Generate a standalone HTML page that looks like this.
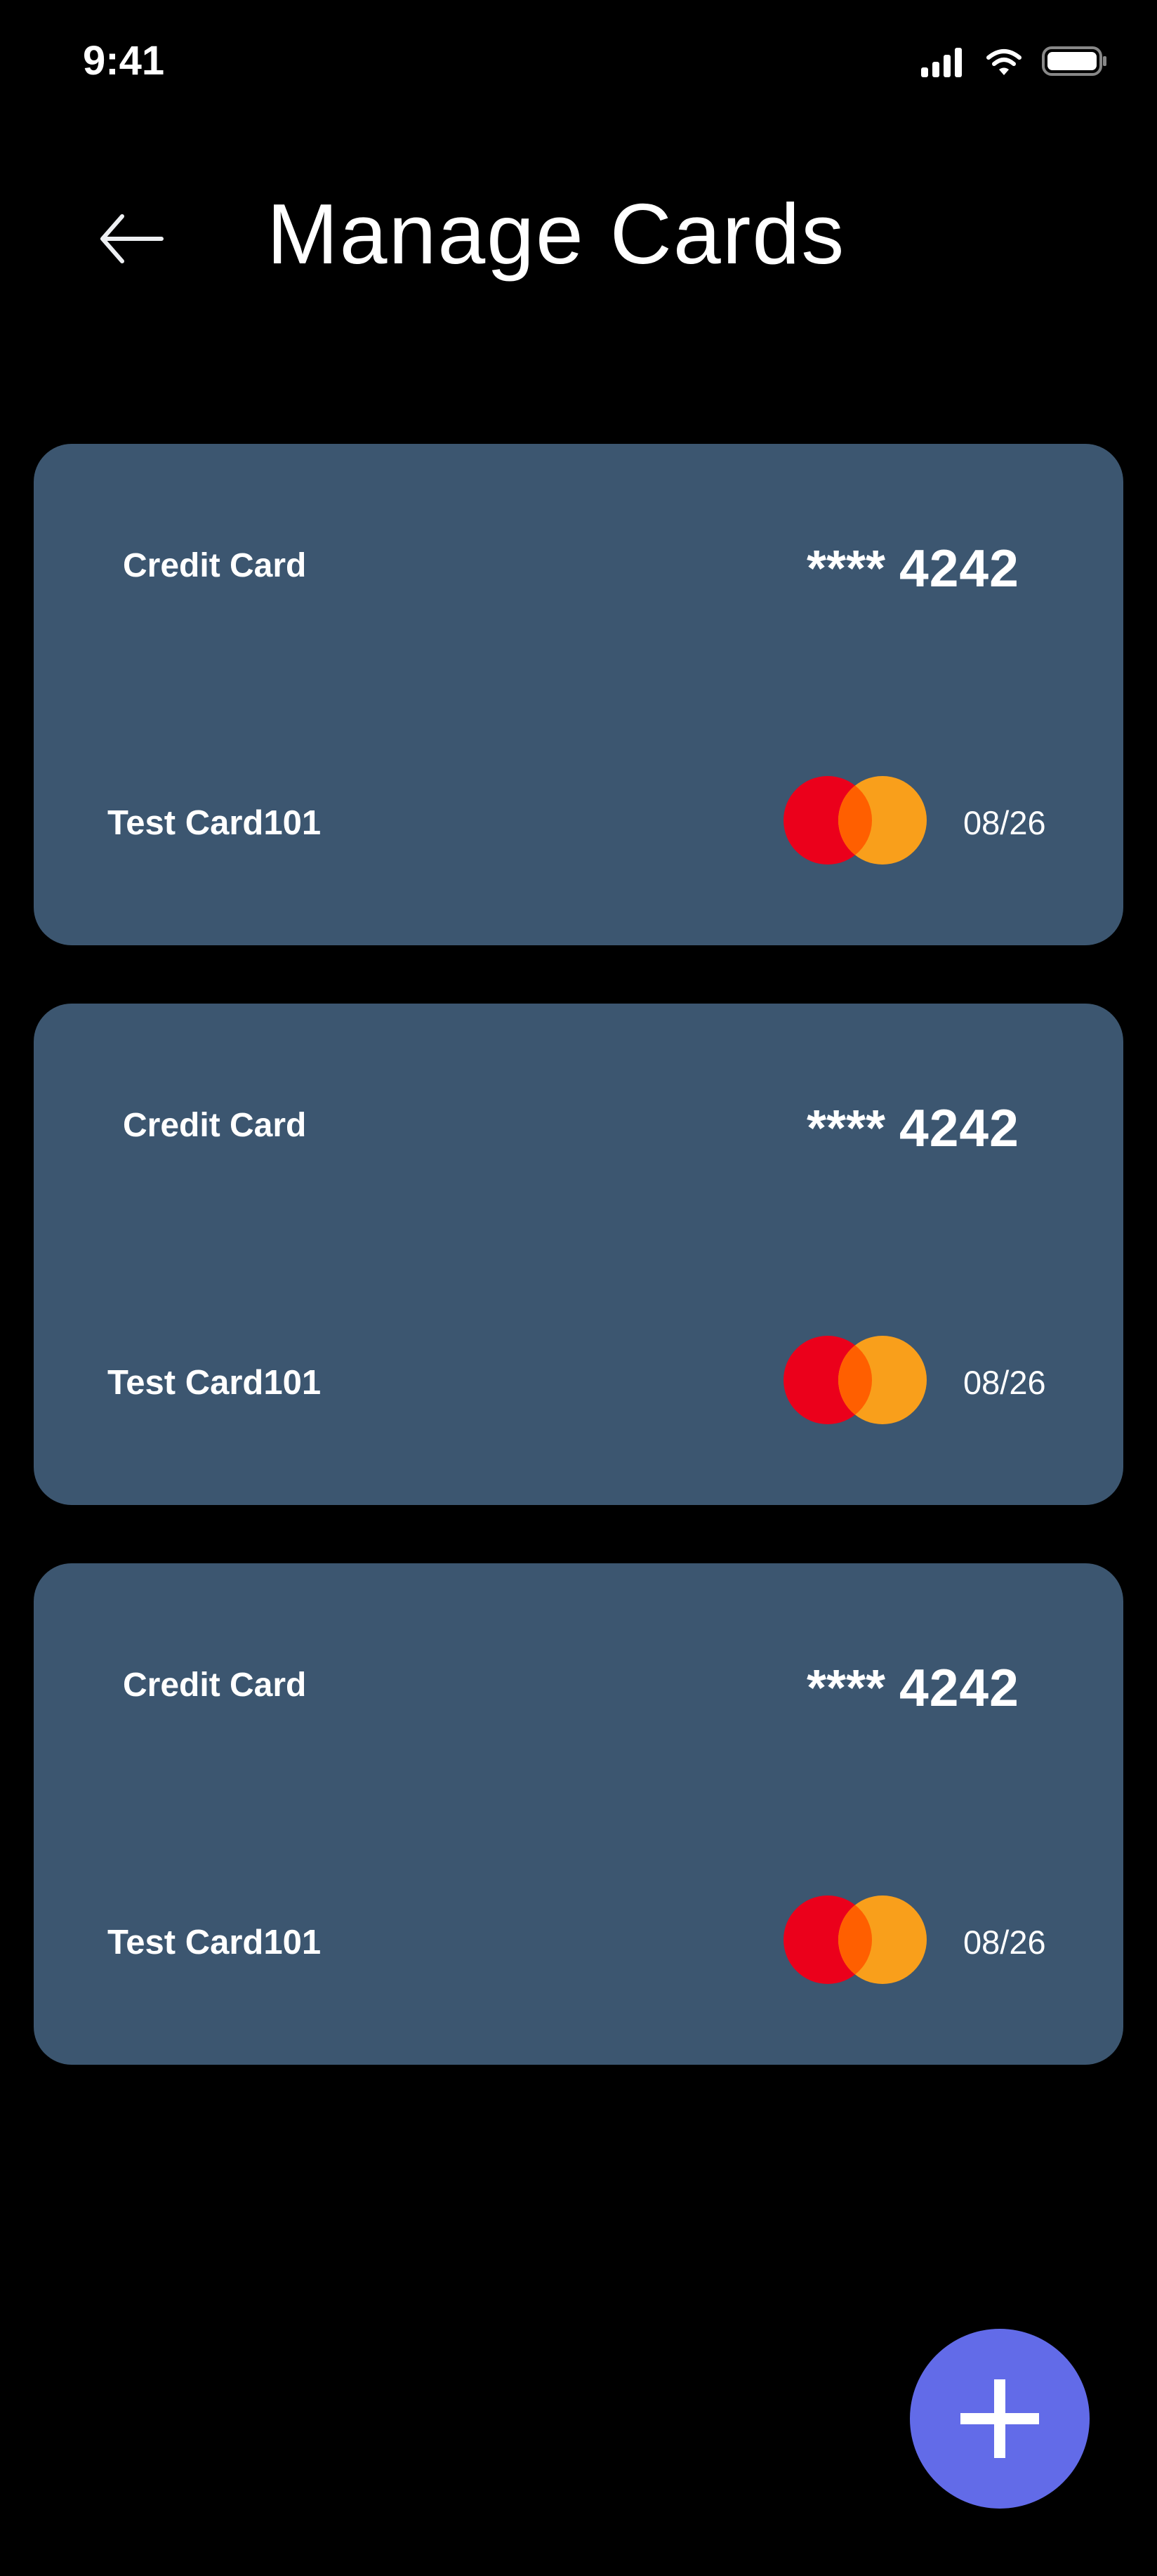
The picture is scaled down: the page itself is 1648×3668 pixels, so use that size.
<!DOCTYPE html>
<html><head><style>
*{margin:0;padding:0;box-sizing:border-box}
body{width:1648px;height:3668px;background:#000;position:relative;overflow:hidden;font-family:"Liberation Sans",sans-serif;color:#fff}
.abs{position:absolute}
.card{position:absolute;left:48px;width:1552px;height:714px;background:#3c5670;border-radius:54px}
.cc{position:absolute;left:127px;top:150px;font-size:48px;font-weight:bold;line-height:1}
.num{position:absolute;left:1101px;top:140px;font-weight:bold;line-height:1;white-space:nowrap}
.num .a{font-size:72px;position:absolute;left:0;top:2px}
.num .b{font-size:75px;position:absolute;left:132px;top:0;letter-spacing:1px}
.name{position:absolute;left:105px;top:516px;font-size:49px;font-weight:bold;line-height:1}
.exp{position:absolute;left:1324px;top:516px;font-size:47px;line-height:1}
.mc{position:absolute;left:1068px;top:472px}
</style></head><body>
<div class="abs" style="left:118px;top:58px;font-size:58px;font-weight:bold;line-height:1">9:41</div>
<svg class="abs" style="left:1310px;top:64px" width="270" height="48" viewBox="0 0 270 48">
<rect x="2" y="32" width="10" height="14" rx="3" fill="#fff"/>
<rect x="18" y="24" width="10" height="22" rx="3" fill="#fff"/>
<rect x="34" y="14" width="10" height="32" rx="3" fill="#fff"/>
<rect x="50" y="4" width="10" height="42" rx="3" fill="#fff"/>
<path d="M98 18 Q120 0 142 18" stroke="#fff" stroke-width="6" fill="none" stroke-linecap="round"/>
<path d="M106 27 Q120 15 134 27" stroke="#fff" stroke-width="6" fill="none" stroke-linecap="round"/>
<path d="M113 35 Q120 30 127 35 L120 43 Z" fill="#fff"/>
<rect x="176" y="4" width="82" height="38" rx="12" fill="none" stroke="#888" stroke-width="4"/>
<rect x="182" y="10" width="70" height="26" rx="7" fill="#fff"/>
<rect x="261" y="16" width="5" height="14" rx="2" fill="#888"/>
</svg>
<svg class="abs" style="left:140px;top:302px" width="96" height="76" viewBox="0 0 96 76">
<path d="M90 38 H8 M34 6 L6 38 L34 70" stroke="#eef0f3" stroke-width="6" fill="none" stroke-linecap="round" stroke-linejoin="round"/>
</svg>
<div class="abs" style="left:380px;top:266px;font-size:122px;line-height:1.1;letter-spacing:2px">Manage Cards</div>

<div class="card" style="top:632px">
<div class="cc">Credit Card</div><div class="num"><span class="a">****</span><span class="b">4242</span></div>
<div class="name">Test Card101</div>
<svg class="mc" width="206" height="128" viewBox="0 0 206 128"><circle cx="63" cy="64" r="63" fill="#eb001b"/><circle cx="141" cy="64" r="63" fill="#f99f1b"/><path d="M102 14.5 A63 63 0 0 1 102 113.5 A63 63 0 0 1 102 14.5Z" fill="#ff5f00"/></svg>
<div class="exp">08/26</div>
</div>
<div class="card" style="top:1429px">
<div class="cc">Credit Card</div><div class="num"><span class="a">****</span><span class="b">4242</span></div>
<div class="name">Test Card101</div>
<svg class="mc" width="206" height="128" viewBox="0 0 206 128"><circle cx="63" cy="64" r="63" fill="#eb001b"/><circle cx="141" cy="64" r="63" fill="#f99f1b"/><path d="M102 14.5 A63 63 0 0 1 102 113.5 A63 63 0 0 1 102 14.5Z" fill="#ff5f00"/></svg>
<div class="exp">08/26</div>
</div>
<div class="card" style="top:2226px">
<div class="cc">Credit Card</div><div class="num"><span class="a">****</span><span class="b">4242</span></div>
<div class="name">Test Card101</div>
<svg class="mc" width="206" height="128" viewBox="0 0 206 128"><circle cx="63" cy="64" r="63" fill="#eb001b"/><circle cx="141" cy="64" r="63" fill="#f99f1b"/><path d="M102 14.5 A63 63 0 0 1 102 113.5 A63 63 0 0 1 102 14.5Z" fill="#ff5f00"/></svg>
<div class="exp">08/26</div>
</div>

<div class="abs" style="left:1296px;top:3316px;width:256px;height:256px;border-radius:50%;background:#626be8"></div>
<div class="abs" style="left:1368px;top:3436px;width:112px;height:16px;background:#fff"></div>
<div class="abs" style="left:1416px;top:3388px;width:16px;height:112px;background:#fff"></div>
</body></html>
